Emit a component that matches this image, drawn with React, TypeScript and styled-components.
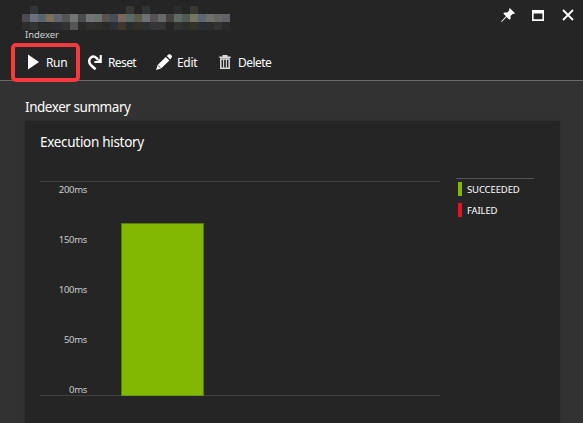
import React from "react";
import styled, { createGlobalStyle } from "styled-components";

const GlobalStyle = createGlobalStyle`
  * { box-sizing: border-box; }
  html, body { margin: 0; background: #323232; overflow: hidden; }
`;

const Blade = styled.div`
  width: 583px;
  height: 423px;
  overflow: hidden;
  display: flex;
  flex-direction: column;
  background: #323232;
  color: #fff;
  font-family: "Noto Sans", "Open Sans", sans-serif;
`;

const Header = styled.header`
  height: 81px;
  flex: none;
  background: #252525;
  border-bottom: 1px solid #6a6a6a;
`;

const TitleBar = styled.div`
  height: 44px;
  display: flex;
  justify-content: space-between;
  padding: 6px 7px 0 22px;
`;

const Label = styled.span<{ $size: number; $line: number; $track?: number }>`
  display: block;
  white-space: nowrap;
  font-size: ${(p) => p.$size}px;
  line-height: ${(p) => p.$line}px;
  letter-spacing: ${(p) => p.$track ?? 0}px;
`;

const Subtitle = styled(Label)`
  padding-left: 3px;
  margin-top: -2px;
  color: #d0d0d0;
`;

const Mosaic = styled.div`
  display: grid;
  grid-template-columns: repeat(26, 8px);
  grid-auto-rows: 8px;
`;

const Pixel = styled.i<{ $color: string }>`
  background: ${(p) => p.$color};
`;

const WindowControls = styled.div`
  display: flex;
  gap: 14px;
`;

const ControlButton = styled.button`
  width: 16px;
  height: 18px;
  padding: 0;
  border: 0;
  background: none;
  svg { display: block; }
`;

const Toolbar = styled.nav`
  height: 36px;
  display: flex;
  padding-left: 25px;
`;

const Command = styled.button<{ $width: number }>`
  position: relative;
  width: ${(p) => p.$width}px;
  height: 36px;
  padding: 0;
  border: 0;
  display: flex;
  align-items: center;
  gap: 5px;
  color: #fff;
  background: none;
  font-family: inherit;
  svg { flex: none; display: block; }
`;

const CommandLabel = styled(Label)`
  padding-top: 2px;
`;

const Highlight = styled.span`
  position: absolute;
  left: -14px;
  top: -1px;
  width: 69px;
  height: 39px;
  border: 4px solid #f93a3c;
  border-radius: 5px;
  z-index: 1;
`;

const Content = styled.main`
  flex: 1;
  min-height: 0;
  display: flex;
  flex-direction: column;
  padding: 16px 23px 0 25px;
`;

const Card = styled.section`
  flex: 1;
  margin-top: 4px;
  padding: 11px 25px 0 15px;
  background: #252525;
  box-shadow: 0 0 2px #2a2a2a;
`;

const ChartRow = styled.div`
  display: flex;
  gap: 16px;
  margin-top: 25px;
`;

const Plot = styled.div`
  width: 400px;
  height: 215px;
  margin-top: 4px;
  display: flex;
  gap: 34px;
  align-items: flex-end;
  border-top: 1px solid #414141;
  border-bottom: 1px solid #414141;
`;

const Axis = styled.div`
  width: 47px;
  height: 212px;
  display: flex;
  flex-direction: column;
  align-items: flex-end;
  gap: 36px;
  color: #ccc;
`;

const Bar = styled.div<{ $height: number }>`
  width: 83px;
  height: ${(p) => p.$height}px;
  margin-bottom: -1px;
  background: #80b900;
  border: 1px solid #587b0c;
  border-bottom-color: #6a970a;
`;

const Legend = styled.div`
  width: 78px;
  height: 44px;
  border-top: 1px solid #555;
  padding: 3px 0 0 2px;
  margin-top: 1px;
  display: flex;
  flex-direction: column;
  gap: 7px;
`;

const LegendItem = styled.div<{ $color: string }>`
  height: 14px;
  border-left: 4px solid ${(p) => p.$color};
  padding: 1px 0 0 5px;
`;

const mosaicRows: Record<number, string>[] = [
  { 1: "#333637", 13: "#393934", 15: "#303234", 19: "#2c2c2c", 21: "#393934" },
  Object.fromEntries(
    "#4a4a50 #6b707a #56666b #7a6e5d #5f646f #555555 #737575 #4a4d4f #747474 #69736f #5a504f #454d58 #786859 #5c6a69 #5d5b4b #6c7274 #575157 #666869 #44433f #5f6a64 #505b57 #75745e #5e6573 #6f6f6d #666665 #626168"
      .split(" ").map((c, i) => [i, c])
  ),
  Object.fromEntries(
    "#2d2d2d #323334 #2a2c2b #2c2b29 #2b2d30 #333332 #555555 #29292a #302f2d #2e2e2c #2b2a29 #2b3138 #3d372d #282c2a #323129 #2d3032 #363437 #343434 #282624 #303331 #2b2e2b #333329 #292d33 #2c2c2b #333333 #2a2a2a"
      .split(" ").map((c, i) => [i, c])
  ),
];

const ticks = ["200ms", "150ms", "100ms", "50ms", "0ms"];

const PinIcon = () => (
  <svg width="16" height="18" viewBox="0 0 16 18" fill="#fff">
    <path d="M9.7 2 15 7.2l-1.3.8-.9-.3-2.3 2.4.1 2.6-1.2 1L6.6 11 2 15.8l-.8.2.3-1L6 10.2 3.3 7.5l1.2-1.1 2.7.1 2.2-2.3-.4-1z" />
  </svg>
);
const RestoreIcon = () => (
  <svg width="16" height="18" viewBox="0 0 16 18">
    <path fill="#fff" fillRule="evenodd" d="M2 4h12v11H2zM3.6 7.6v5.6h8.8V7.6z" />
  </svg>
);
const CloseIcon = () => (
  <svg width="16" height="18" viewBox="0 0 16 18">
    <path d="m3 4 10 10M13 4 3 14" stroke="#fff" strokeWidth="1.8" />
  </svg>
);
const PlayIcon = () => (
  <svg width="16" height="18" viewBox="0 0 16 18">
    <path d="M3 1.5v15L14 9z" fill="#fff" />
  </svg>
);
const ResetIcon = () => (
  <svg width="16" height="18" viewBox="0 0 16 18">
    <path d="M8.6 16.2 4 12.2C1.4 9.8 1.7 6.2 4 4.5 6.4 2.7 9.6 3.7 11 7" fill="none" stroke="#fff" strokeWidth="2.5" />
    <path d="M14.8 2v8H7.4V7.9h3.2l2.1-2.2V2z" fill="#fff" />
  </svg>
);
const PencilIcon = () => (
  <svg width="16" height="18" viewBox="0 0 16 18" fill="#fff">
    <path d="m9.8 3.9 3.6 3.6-8.4 8L.1 17l1.5-4.9zM10.8 3l1.7-1.6q1-.8 2 0l1.1 1.2q.8 1 0 1.9l-1.4 2z" />
    <path d="m2.2 12.6 2.4 2.3" stroke="#252525" strokeWidth=".8" />
  </svg>
);
const TrashIcon = () => (
  <svg width="16" height="18" viewBox="0 0 16 18" fill="none" stroke="#dcdcdc">
    <path d="M2.3 4.3h11.4M5.5 2.8h5" strokeWidth="1.4" />
    <path d="M3.8 6v9.2h8.4V6z" strokeWidth="1.5" />
    <path d="M6.6 6v8.8M9.4 6v8.8" strokeWidth="1.1" />
  </svg>
);

export default function App() {
  return (
    <>
      <GlobalStyle />
      <Blade>
        <Header>
          <TitleBar>
            <div>
              <Mosaic>
                {mosaicRows.flatMap((row, y) =>
                  Array.from({ length: 26 }, (_, x) => (
                    <Pixel key={`${y}-${x}`} $color={row[x] ?? "transparent"} />
                  ))
                )}
              </Mosaic>
              <Subtitle $size={9.5} $line={14} $track={-0.05}>Indexer</Subtitle>
            </div>
            <WindowControls>
              <ControlButton aria-label="Pin"><PinIcon /></ControlButton>
              <ControlButton aria-label="Restore"><RestoreIcon /></ControlButton>
              <ControlButton aria-label="Close"><CloseIcon /></ControlButton>
            </WindowControls>
          </TitleBar>
          <Toolbar>
            <Command $width={62}>
              <Highlight />
              <PlayIcon />
              <CommandLabel $size={12} $line={18} $track={-0.35}>Run</CommandLabel>
            </Command>
            <Command $width={69}><ResetIcon /><CommandLabel $size={12} $line={18} $track={-0.6}>Reset</CommandLabel></Command>
            <Command $width={61}><PencilIcon /><CommandLabel $size={12} $line={18} $track={-0.3}>Edit</CommandLabel></Command>
            <Command $width={70}><TrashIcon /><CommandLabel $size={12} $line={18} $track={-0.55}>Delete</CommandLabel></Command>
          </Toolbar>
        </Header>
        <Content>
          <Label $size={13.5} $line={20} $track={-0.45}>Indexer summary</Label>
          <Card>
            <Label $size={13.5} $line={20} $track={-0.3}>Execution history</Label>
            <ChartRow>
              <Plot>
                <Axis>
                  {ticks.map((t) => <Label key={t} $size={9.5} $line={14} $track={-0.3}>{t}</Label>)}
                </Axis>
                <Bar $height={173} />
              </Plot>
              <Legend>
                <LegendItem $color="#80b900"><Label $size={9.5} $line={14} $track={-0.12}>SUCCEEDED</Label></LegendItem>
                <LegendItem $color="#e81123"><Label $size={9.5} $line={14} $track={-0.15}>FAILED</Label></LegendItem>
              </Legend>
            </ChartRow>
          </Card>
        </Content>
      </Blade>
    </>
  );
}
